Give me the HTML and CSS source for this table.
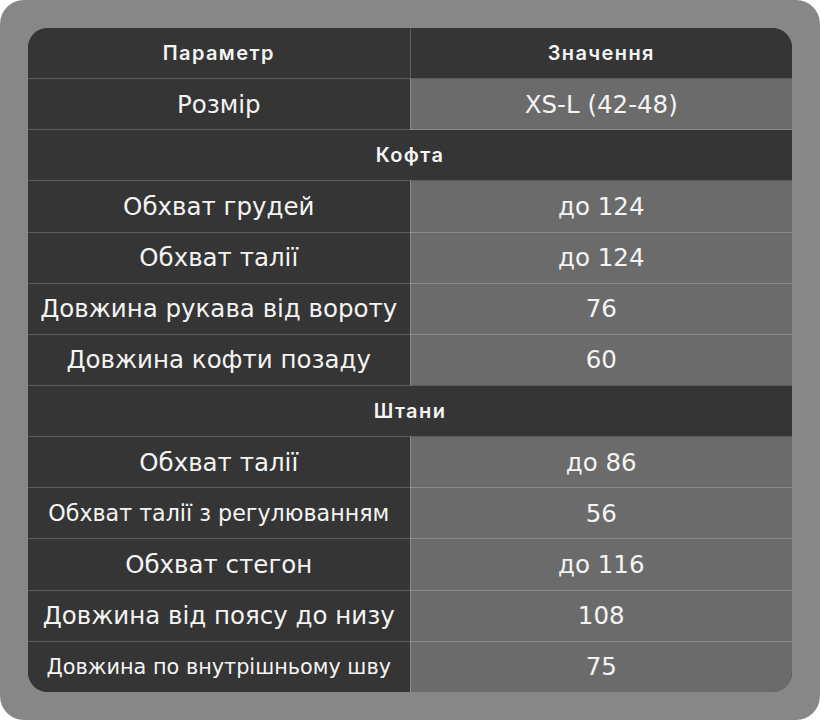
FILE: index.html
```html
<!DOCTYPE html>
<html lang="uk">
<head>
<meta charset="utf-8">
<title>Розміри</title>
<link rel="stylesheet" href="styles.css">
</head>
<body>
<div class="frame">
  <div class="card">
    <table class="sizes">
      <tr class="head"><th>Параметр</th><th>Значення</th></tr>
      <tr><td class="name">Розмір</td><td class="val">XS-L (42-48)</td></tr>
      <tr class="section"><td colspan="2">Кофта</td></tr>
      <tr><td class="name">Обхват грудей</td><td class="val">до 124</td></tr>
      <tr><td class="name">Обхват талії</td><td class="val">до 124</td></tr>
      <tr><td class="name">Довжина рукава від вороту</td><td class="val">76</td></tr>
      <tr><td class="name">Довжина кофти позаду</td><td class="val">60</td></tr>
      <tr class="section"><td colspan="2">Штани</td></tr>
      <tr><td class="name">Обхват талії</td><td class="val">до 86</td></tr>
      <tr><td class="name small">Обхват талії з регулюванням</td><td class="val">56</td></tr>
      <tr><td class="name">Обхват стегон</td><td class="val">до 116</td></tr>
      <tr><td class="name">Довжина від поясу до низу</td><td class="val">108</td></tr>
      <tr><td class="name smaller">Довжина по внутрішньому шву</td><td class="val">75</td></tr>
    </table>
  </div>
</div>
</body>
</html>
```
FILE: styles.css
```css
html, body {
  margin: 0;
  padding: 0;
  background: #ffffff;
}
.frame {
  width: 820px;
  height: 720px;
  box-sizing: border-box;
  padding: 28px;
  background: #878787;
  border-radius: 24px;
}
.card {
  height: 664px;
  border-radius: 20px;
  overflow: hidden;
  background: #353535;
}
.sizes {
  width: 100%;
  height: 100%;
  border-collapse: collapse;
  table-layout: fixed;
  font-family: "DejaVu Sans", sans-serif;
  color: #f4f4f4;
}
.sizes th, .sizes td {
  height: 50px;
  text-align: center;
  vertical-align: middle;
  padding: 0;
  border-bottom: 1px solid rgba(255,255,255,0.2);
}
.sizes tr:last-child td {
  border-bottom: none;
}
.sizes th {
  font-family: "Inter", sans-serif;
  font-weight: 600;
  font-size: 20px;
  letter-spacing: 1.4px;
  background: #353535;
}
.sizes th:first-child, .sizes td.name {
  border-right: 1px solid rgba(255,255,255,0.2);
}
.name {
  background: #353535;
  font-size: 24.5px;
}
.name.small {
  font-size: 22.2px;
}
.name.smaller {
  font-size: 20.8px;
}
.val {
  background: #6b6b6b;
  font-size: 24.5px;
}
.section td {
  background: #353535;
  font-family: "Inter", sans-serif;
  font-weight: 600;
  font-size: 20px;
  letter-spacing: 1.4px;
}
```
